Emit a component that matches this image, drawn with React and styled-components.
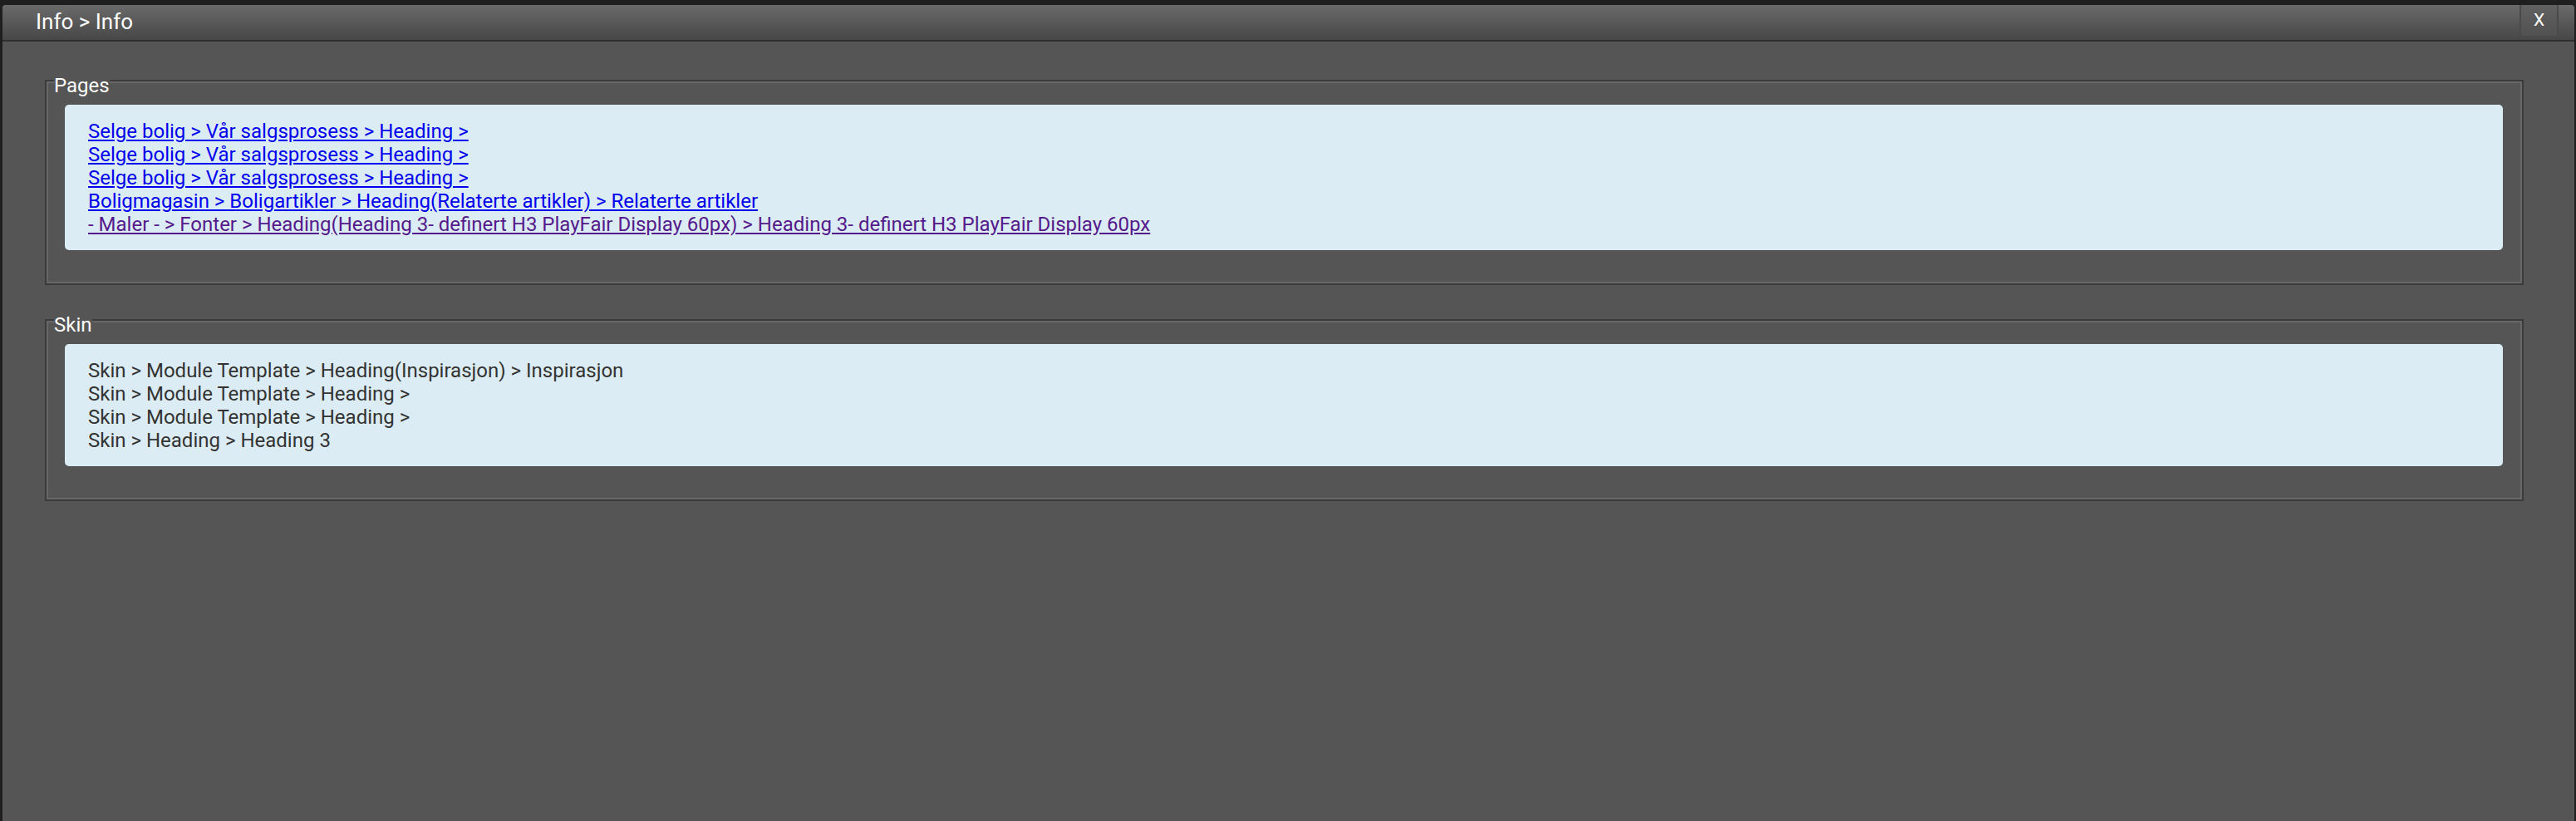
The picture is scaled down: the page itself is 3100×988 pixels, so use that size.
import React from 'react'
import styled, { createGlobalStyle } from 'styled-components'

const pages = [
  { text: 'Selge bolig > Vår salgsprosess > Heading >' },
  { text: 'Selge bolig > Vår salgsprosess > Heading >' },
  { text: 'Selge bolig > Vår salgsprosess > Heading >' },
  { text: 'Boligmagasin > Boligartikler > Heading(Relaterte artikler) > Relaterte artikler' },
  { text: '- Maler - > Fonter > Heading(Heading 3- definert H3 PlayFair Display 60px) > Heading 3- definert H3 PlayFair Display 60px', visited: true }
]

const skins = [
  'Skin > Module Template > Heading(Inspirasjon) > Inspirasjon',
  'Skin > Module Template > Heading >',
  'Skin > Module Template > Heading >',
  'Skin > Heading > Heading 3'
]

const GlobalStyle = createGlobalStyle`
  html, body {
    margin: 0;
    height: 100%;
    background: #1f1f1f;
    font-family: Roboto, 'Liberation Sans', sans-serif;
  }
`

const Window = styled.div`
  margin: 6px 2px 0 3px;
  min-height: calc(100vh - 6px);
  background: #555555;
  border-radius: 4px 4px 0 0;
  overflow: hidden;
`

const TitleBar = styled.div`
  display: flex;
  align-items: flex-start;
  height: 42px;
  padding-left: 40px;
  background: linear-gradient(#6a6a6a, #474747);
  border-bottom: 2px solid #2f2f2f;
`

const Title = styled.div`
  color: #ffffff;
  font-size: 26px;
  line-height: 40px;
`

const CloseButton = styled.button`
  margin-left: auto;
  margin-right: 19px;
  width: 47px;
  height: 37px;
  padding: 0;
  border: none;
  border-left: 2px solid #4a4a4a;
  border-right: 2px solid #4a4a4a;
  background: linear-gradient(#616161, #515151);
  color: #ffffff;
  font-family: Roboto, 'Liberation Sans', sans-serif;
  font-size: 21px;
  line-height: 37px;
`

const Body = styled.div`
  padding: 46px 61px 0 51px;
`

const Group = styled.section`
  border: 2px solid #3b3b3b;
  box-shadow: inset 0 0 0 2px #676767;
  padding-bottom: 40px;
  margin-bottom: 41px;
`

const Legend = styled.div`
  width: fit-content;
  margin: -9px 0 9px 9px;
  background: #555555;
  color: #ffffff;
  font-size: 24px;
  line-height: 28px;
`

const Panel = styled.div`
  margin: 0 23px 0 22px;
  padding: 18px 28px 17px;
  background: #dcecf5;
  border-radius: 5px;
  font-size: 24px;
  line-height: 28px;
  color: #333333;
`

const Line = styled.div`
  white-space: nowrap;
`

const PageLink = styled.a`
  color: ${p => (p.$visited ? '#551a8b' : '#0000ee')};
  text-decoration: underline;
`

const App = () => (
  <>
    <GlobalStyle />
    <Window>
      <TitleBar>
        <Title>Info &gt; Info</Title>
        <CloseButton>X</CloseButton>
      </TitleBar>
      <Body>
        <Group>
          <Legend>Pages</Legend>
          <Panel>
            {pages.map((page, i) => (
              <Line key={i}>
                <PageLink href="#" $visited={page.visited}>{page.text}</PageLink>
              </Line>
            ))}
          </Panel>
        </Group>
        <Group>
          <Legend>Skin</Legend>
          <Panel>
            {skins.map((s, i) => (
              <Line key={i}>{s}</Line>
            ))}
          </Panel>
        </Group>
      </Body>
    </Window>
  </>
)

export default App
